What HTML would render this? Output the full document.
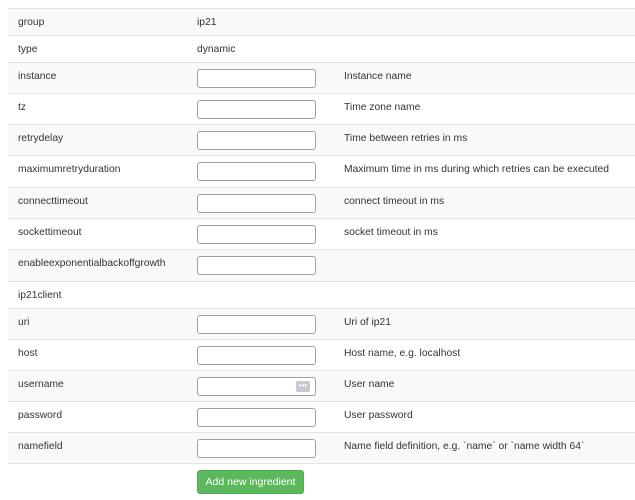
<!DOCTYPE html>
<html><head><style>
body{margin:0;width:635px;height:500px;background:#fff;font-family:"Liberation Sans",Arial,sans-serif;font-size:10.3px;color:#333;overflow:hidden}
.t{position:absolute;left:8px;top:8px;width:627px;border-top:1px solid #e4e4e4}
.r{position:relative;border-bottom:1px solid #e4e4e4;box-sizing:border-box}
.r:nth-child(odd){background:#f9f9f9}
.r span{position:absolute;top:8px}
.a{left:10px}.b{left:189px}.c{left:336px}
.i{position:absolute;left:189px;top:6px;width:119px;height:19px;box-sizing:border-box;border:1px solid #a0a0a0;border-radius:3px;background:#fff}
.k{position:absolute;right:5px;top:3px;width:14px;height:11px;background:#c6c9ce;border-radius:2px;color:#fff;font-size:8px;line-height:9px;text-align:center}
.btn{position:absolute;left:197px;top:470px;width:107px;height:24px;background:#5cb85c;border:1px solid #4cae4c;box-sizing:border-box;border-radius:3px;color:#fff;font-size:10.5px;line-height:22px;text-align:center}
</style></head><body>
<div class="t">
<div class="r" style="height:27px"><span class="a">group</span><span class="b">ip21</span></div>
<div class="r" style="height:27px"><span class="a">type</span><span class="b">dynamic</span></div>
<div class="r" style="height:31px"><span class="a">instance</span><div class="i"></div><span class="c">Instance name</span></div>
<div class="r" style="height:31px"><span class="a">tz</span><div class="i"></div><span class="c">Time zone name</span></div>
<div class="r" style="height:31px"><span class="a">retrydelay</span><div class="i"></div><span class="c">Time between retries in ms</span></div>
<div class="r" style="height:32px"><span class="a">maximumretryduration</span><div class="i"></div><span class="c">Maximum time in ms during which retries can be executed</span></div>
<div class="r" style="height:31px"><span class="a">connecttimeout</span><div class="i"></div><span class="c">connect timeout in ms</span></div>
<div class="r" style="height:31px"><span class="a">sockettimeout</span><div class="i"></div><span class="c">socket timeout in ms</span></div>
<div class="r" style="height:32px"><span class="a">enableexponentialbackoffgrowth</span><div class="i"></div></div>
<div class="r" style="height:27px"><span class="a">ip21client</span></div>
<div class="r" style="height:31px"><span class="a">uri</span><div class="i"></div><span class="c">Uri of ip21</span></div>
<div class="r" style="height:31px"><span class="a">host</span><div class="i"></div><span class="c">Host name, e.g. localhost</span></div>
<div class="r" style="height:31px"><span class="a">username</span><div class="i"><div class="k">•••</div></div><span class="c">User name</span></div>
<div class="r" style="height:31px"><span class="a">password</span><div class="i"></div><span class="c">User password</span></div>
<div class="r" style="height:31px"><span class="a">namefield</span><div class="i"></div><span class="c">Name field definition, e.g. `name` or `name width 64`</span></div>
</div>
<div class="btn">Add new ingredient</div>
</body></html>
